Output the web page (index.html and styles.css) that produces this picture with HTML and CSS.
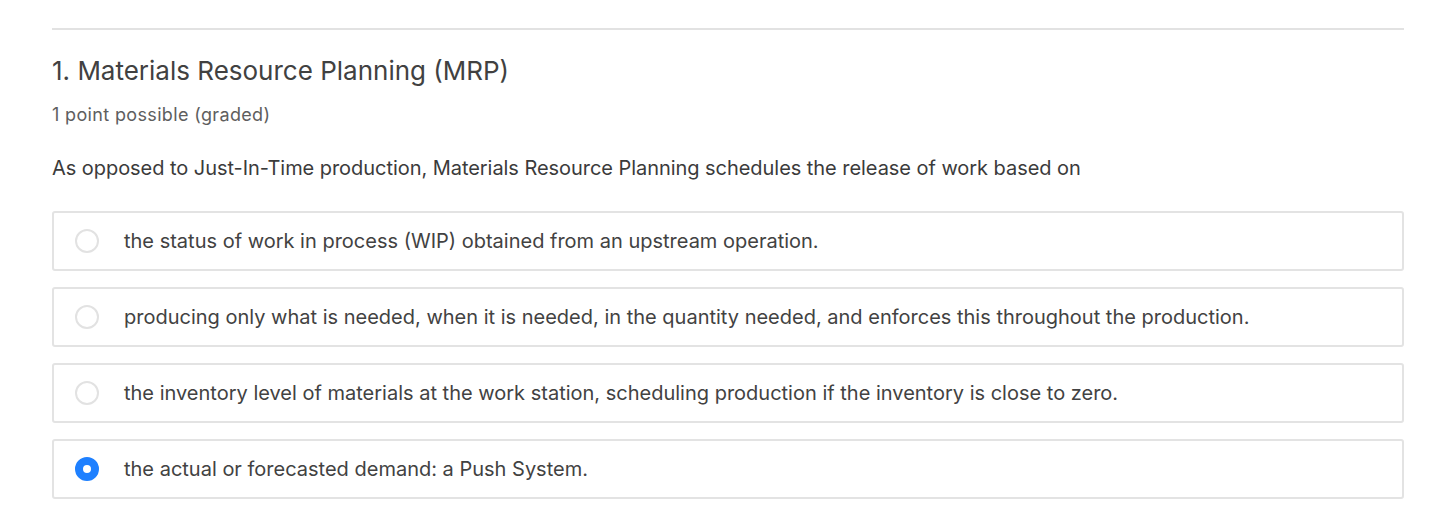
FILE: index.html
```html
<!DOCTYPE html>
<html>
<head>
<meta charset="utf-8">
<link rel="stylesheet" href="styles.css">
</head>
<body>
<div class="problem">
  <h3 class="title">1. Materials Resource Planning (MRP)</h3>
  <div class="meta">1 point possible (graded)</div>
  <p class="question">As opposed to Just-In-Time production, Materials Resource Planning schedules the release of work based on</p>
  <div class="options">
    <label class="option"><span class="radio"></span><span class="text">the status of work in process (WIP) obtained from an upstream operation.</span></label>
    <label class="option"><span class="radio"></span><span class="text">producing only what is needed, when it is needed, in the quantity needed, and enforces this throughout the production.</span></label>
    <label class="option"><span class="radio"></span><span class="text">the inventory level of materials at the work station, scheduling production if the inventory is close to zero.</span></label>
    <label class="option"><span class="radio checked"></span><span class="text">the actual or forecasted demand: a Push System.</span></label>
  </div>
</div>
</body>
</html>
```

FILE: styles.css
```css
html, body {
  margin: 0;
  padding: 0;
  background: #fff;
}
body {
  font-family: Inter, "Noto Sans", sans-serif;
  color: #454545;
}
.problem {
  margin: 28px 36px 0 52px;
  border-top: 2px solid #e2e2e2;
  padding-top: 26px;
}
.title {
  margin: 0;
  font-size: 26px;
  font-weight: 400;
  line-height: 30px;
  color: #414141;
}
.meta {
  margin-top: 18px;
  font-size: 18px;
  letter-spacing: 0.35px;
  line-height: 22px;
  color: #5e5e5e;
}
.question {
  margin: 30px 0 0;
  font-size: 20px;
  letter-spacing: -0.05px;
  line-height: 24px;
  color: #3b3b3b;
}
.options {
  margin-top: 31px;
  display: flex;
  flex-direction: column;
  gap: 16px;
}
.option {
  display: flex;
  align-items: center;
  height: 56px;
  border: 2px solid #e3e3e3;
  border-radius: 3px;
  padding-left: 21px;
}
.radio {
  width: 24px;
  height: 24px;
  border-radius: 50%;
  border: 2px solid #e2e2e2;
  box-sizing: border-box;
  flex: none;
  background: #fff;
}
.radio.checked {
  border: 8px solid #1e80ff;
  background: #fff;
}
.text {
  margin-left: 25px;
  font-size: 20px;
  line-height: 24px;
  color: #424242;
}
```
